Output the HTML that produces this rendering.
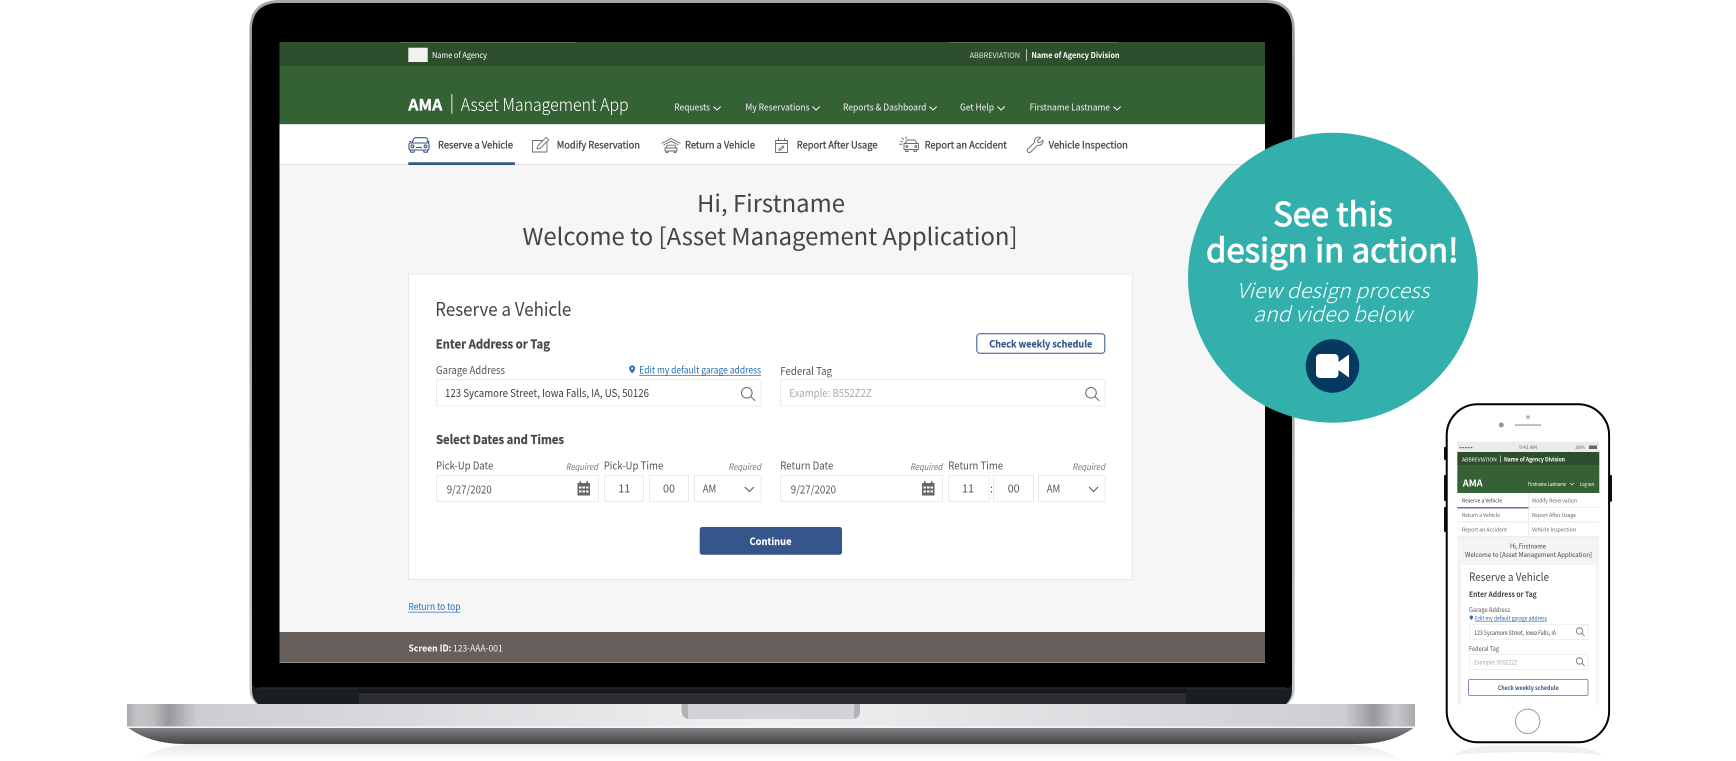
<!DOCTYPE html>
<html><head><meta charset="utf-8"><title>Asset Management App</title>
<style>
html,body{margin:0;padding:0;background:#fff;width:1736px;height:761px;overflow:hidden}
svg{display:block;font-family:"Noto Sans CJK JP","Liberation Sans",sans-serif}
.b{font-weight:700}
.l{font-weight:300}
.i{font-style:italic}
</style></head><body>
<svg width="1736" height="761" viewBox="0 0 1736 761" xmlns="http://www.w3.org/2000/svg">
<defs>
<linearGradient id="baseH" x1="0" x2="1" y1="0" y2="0">
<stop offset="0" stop-color="#a9aaad"/><stop offset=".008" stop-color="#c4c5c7"/><stop offset=".02" stop-color="#bdbec0"/><stop offset=".032" stop-color="#98999c"/><stop offset=".055" stop-color="#cdced1"/><stop offset=".2" stop-color="#d8d9dc"/><stop offset=".5" stop-color="#f1f1f2"/><stop offset=".8" stop-color="#d8d9dc"/><stop offset=".945" stop-color="#cdced1"/><stop offset=".968" stop-color="#98999c"/><stop offset=".985" stop-color="#c9cacc"/><stop offset="1" stop-color="#a9aaad"/>
</linearGradient>
<linearGradient id="baseV" x1="0" x2="0" y1="0" y2="1"><stop offset="0" stop-color="#96979a"/><stop offset=".6" stop-color="#7f8083"/><stop offset="1" stop-color="#434548"/></linearGradient>
<linearGradient id="refl" x1="0" x2="0" y1="0" y2="1"><stop offset="0" stop-color="#e8e8e8"/><stop offset="1" stop-color="#fff"/></linearGradient>
<linearGradient id="lidS" x1="0" x2="0" y1="0" y2="1"><stop offset="0" stop-color="#a8a8a8"/><stop offset=".1" stop-color="#8e8e8e"/><stop offset="1" stop-color="#c9c9c9"/></linearGradient>
<filter id="s" x="0" y="0" width="1" height="1"><feGaussianBlur stdDeviation=".3"/></filter>
<filter id="p" x="-.02" y="-.02" width="1.04" height="1.04"><feGaussianBlur stdDeviation=".35"/></filter>
</defs>

<!-- laptop base -->
<path d="M135 761C150 752 166 746 190 744H1350C1374 746 1390 752 1405 761Z" fill="url(#refl)"/>
<!-- lid -->
<path d="M256 704Q249.500 698 249.500 690V30Q249.500 0 280 0H1265Q1294.700 0 1294.700 30V690Q1294.700 698 1288 704Z" fill="url(#lidS)"/>
<path d="M258 704Q252 699 252 690V30Q252 3 280 3H1265Q1292 3 1292 30V690Q1292 699 1286 704Z" fill="#1b1e21"/>
<rect x="359" y="688" width="827" height="16" fill="#2b2d30"/>
<rect x="359" y="688" width="827" height="5" fill="#15171a"/>
<path d="M252 30Q252 3 280 3H1265Q1292 3 1292 30V682Q1292 688 1286 688H258Q252 688 252 682Z" fill="#000"/>
<rect x="258" y="687.500" width="1028" height=".8" fill="#3a3c3f"/>
<path d="M127 704H1415V727C1400 738 1382 744 1355 744H185C160 744 142 738 127 727Z" fill="url(#baseV)"/>
<rect x="127" y="704" width="1288" height="23" fill="url(#baseH)"/>
<rect x="127" y="726.500" width="1288" height="1.500" fill="#fff" opacity=".9"/>
<path d="M681.700 704H860V711Q860 719 852 719H690Q681.700 719 681.700 711Z" fill="#d2d3d6"/>
<path d="M681.700 704H688V719H690Q681.700 719 681.700 711Z" fill="#b2b3b6"/>
<path d="M854 704H860V711Q860 719 852 719H854Z" fill="#b2b3b6"/>

<!-- screen -->
<g filter="url(#s)">
<rect x="279.500" y="42" width="985.500" height="621" fill="#f6f6f6"/>
<rect x="279.500" y="42" width="985.500" height="24" fill="#2e4f2d"/>
<rect x="400" y="42" width="176" height=".8" fill="#5c7a5c"/>
<rect x="948" y="42" width="170" height=".8" fill="#5c7a5c"/>
<rect x="279.500" y="66" width="985.500" height="58.300" fill="#366236"/>
<rect x="279.500" y="124.300" width="985.500" height="40" fill="#fff"/>
<rect x="279.500" y="164" width="985.500" height="1" fill="#e0e0e0"/>
<rect x="408.300" y="47.700" width="19.400" height="14.300" fill="#f2f2f2"/>
<g fill="#fff">
<text x="432" y="58" textLength="55" lengthAdjust="spacingAndGlyphs" font-size="8">Name of Agency</text>
<text x="969.600" y="58" textLength="50.400" lengthAdjust="spacingAndGlyphs" font-size="7.500" fill="#e4e4e4">ABBREVIATION</text>
<text x="1031.400" y="58" textLength="88.200" lengthAdjust="spacingAndGlyphs" font-size="8" class="b">Name of Agency Division</text>
<text x="408.300" y="110.300" textLength="34" lengthAdjust="spacingAndGlyphs" font-size="15.500" class="b" stroke="#fff" stroke-width=".3">AMA</text>
<text x="460.700" y="111" textLength="168" lengthAdjust="spacingAndGlyphs" font-size="17.500" class="l">Asset Management App</text>
<g font-size="9.200" fill="#f2f2f2">
<text x="674.300" y="110.500" textLength="35.700" lengthAdjust="spacingAndGlyphs">Requests</text>
<text x="745.400" y="110.500" textLength="64.200" lengthAdjust="spacingAndGlyphs">My Reservations</text>
<text x="843" y="110.500" textLength="83.400" lengthAdjust="spacingAndGlyphs">Reports &amp; Dashboard</text>
<text x="960" y="110.500" textLength="34" lengthAdjust="spacingAndGlyphs">Get Help</text>
<text x="1029.600" y="110.500" textLength="80.400" lengthAdjust="spacingAndGlyphs">Firstname Lastname</text>
</g>
</g>
<rect x="451.400" y="94" width=".9" height="19.700" fill="#fff"/>
<rect x="1026" y="49" width=".8" height="12" fill="#ddd"/>
<g fill="none" stroke="#fff" stroke-width="1">
<path d="M713.500 106.500l3.600 3.600 3.600-3.600"/><path d="M812.500 106.500l3.600 3.600 3.600-3.600"/><path d="M929.500 106.500l3.600 3.600 3.600-3.600"/><path d="M997.500 106.500l3.600 3.600 3.600-3.600"/><path d="M1113.500 106.500l3.600 3.600 3.600-3.600"/>
</g>
<!-- subnav -->
<g font-size="9.800" fill="#444" stroke="#444" stroke-width=".28">
<text x="438" y="148.500" textLength="75" lengthAdjust="spacingAndGlyphs">Reserve a Vehicle</text>
<text x="556.700" y="148.500" textLength="83.300" lengthAdjust="spacingAndGlyphs">Modify Reservation</text>
<text x="685" y="148.500" textLength="70" lengthAdjust="spacingAndGlyphs">Return a Vehicle</text>
<text x="796.800" y="148.500" textLength="80.700" lengthAdjust="spacingAndGlyphs">Report After Usage</text>
<text x="924.600" y="148.500" textLength="82.200" lengthAdjust="spacingAndGlyphs">Report an Accident</text>
<text x="1048.600" y="148.500" textLength="79.300" lengthAdjust="spacingAndGlyphs">Vehicle Inspection</text>
</g>
<rect x="408.300" y="162.300" width="106.700" height="2.700" fill="#34558b"/>
<!-- subnav icons -->
<g fill="none" stroke="#34558b" stroke-width="1.100" stroke-linejoin="round">
<path d="M412 143l1.800-4.300q.4-1 1.500-1h10.400q1.100 0 1.500 1l1.800 4.300"/>
<rect x="409" y="143" width="20" height="7" rx="1.500"/>
<path d="M410.500 150v1.500q0 .7.700.7h2.300q.7 0 .7-.7V150M423.800 150v1.500q0 .7.700.7h2.300q.7 0 .7-.7V150M409 141.500h2.500M426.500 141.500h2.500"/>
<circle cx="412.500" cy="146.300" r="1.400"/><circle cx="425.500" cy="146.300" r="1.400"/><path d="M416 147.500h6"/>
</g>
<g fill="none" stroke="#6a6a6a" stroke-width=".9" stroke-linejoin="round">
<path d="M547 142v10h-14.500v-11.500h10"/>
<path d="M537 149l.8-3.300 8.400-8.400 2.500 2.500-8.400 8.400z"/>
<path d="M661.500 143.500l9.500-5 9.500 5M663.500 145l7.500-3.800 7.500 3.800"/>
<path d="M666 148l1-2.800h8l1 2.800M665 148h12v3h-12zM666 151v1.500h2V151M674 151v1.500h2V151"/>
<rect x="775.500" y="140.500" width="12" height="12"/><path d="M775.500 143.500h12M778.500 138v3M784.500 138v3"/>
<path d="M779 150.500l.5-1.700 3.500-3 1 1.200-3.500 3z"/>
<path d="M905 143.500l2-3.500h8l2 3.500M904 143.500h14.500v6H904zM905.500 149.500v2h2.500v-2M914 149.500v2h2.500v-2"/>
<circle cx="906.800" cy="146.500" r="1"/><circle cx="915.800" cy="146.500" r="1"/>
<path d="M900 141l3 1M902 137.500l1.500 2.500M899.500 144.500l3-.5M906 136.500l.3 2.500"/>
<path d="M1040.500 137.500l-2.800 2.700.3 2.200 2.200.3 2.700-2.800q.5 2.800-1.400 4.500-1.700 1.400-4 .8l-6.700 6.800q-1.500 1.200-3 0-1.200-1.500 0-3l6.800-6.700q-.6-2.300.8-4 1.700-1.900 5.100-.8z"/>
</g>

<!-- main -->
<g fill="#444">
<text x="697" y="212" textLength="148" lengthAdjust="spacingAndGlyphs" font-size="23.500">Hi, Firstname</text>
<text x="522.500" y="245" textLength="495" lengthAdjust="spacingAndGlyphs" font-size="23.500">Welcome to [Asset Management Application]</text>
</g>
<rect x="408.500" y="274" width="723.800" height="305.500" fill="#fff" stroke="#e8e8e8"/>
<g fill="#444">
<text x="435.300" y="316" textLength="136" lengthAdjust="spacingAndGlyphs" font-size="18.800">Reserve a Vehicle</text>
<text x="435.700" y="348.300" textLength="114.300" lengthAdjust="spacingAndGlyphs" font-size="12.300" class="b" stroke="#444" stroke-width=".2">Enter Address or Tag</text>
<text x="436" y="444" textLength="128" lengthAdjust="spacingAndGlyphs" font-size="12.300" class="b" stroke="#444" stroke-width=".2">Select Dates and Times</text>
</g>
<g fill="#555" font-size="10.800">
<text x="436" y="374" textLength="69" lengthAdjust="spacingAndGlyphs">Garage Address</text>
<text x="780.300" y="375" textLength="51.700" lengthAdjust="spacingAndGlyphs">Federal Tag</text>
<text x="436" y="469.500" textLength="57.300" lengthAdjust="spacingAndGlyphs">Pick-Up Date</text>
<text x="603.700" y="469.500" textLength="59.600" lengthAdjust="spacingAndGlyphs">Pick-Up Time</text>
<text x="780.300" y="469.500" textLength="53" lengthAdjust="spacingAndGlyphs">Return Date</text>
<text x="948.300" y="469.500" textLength="54.700" lengthAdjust="spacingAndGlyphs">Return Time</text>
</g>
<g fill="#777" font-size="8.800" class="i">
<text x="565.700" y="470" textLength="32.300" lengthAdjust="spacingAndGlyphs">Required</text>
<text x="728.300" y="470" textLength="32.700" lengthAdjust="spacingAndGlyphs">Required</text>
<text x="910" y="470" textLength="32.300" lengthAdjust="spacingAndGlyphs">Required</text>
<text x="1072.300" y="470" textLength="32.700" lengthAdjust="spacingAndGlyphs">Required</text>
</g>
<text x="639.300" y="373.300" textLength="121.700" lengthAdjust="spacingAndGlyphs" font-size="9.800" fill="#2b6cb0">Edit my default garage address</text>
<rect x="639.300" y="375" width="121.700" height=".7" fill="#2b6cb0"/>
<path d="M632.200 365.500c-1.800 0-3 1.300-3 2.900 0 2.100 3 5.100 3 5.100s3-3 3-5.100c0-1.600-1.200-2.900-3-2.900zm0 4a1.100 1.100 0 1 1 0-2.200 1.100 1.100 0 0 1 0 2.200z" fill="#2b6cb0"/>
<g fill="#fff" stroke="#ebebeb">
<rect x="436.500" y="379.500" width="324.500" height="26.500"/>
<rect x="780.500" y="379.500" width="324.500" height="26.500"/>
<rect x="436.500" y="475.500" width="162" height="26"/>
<rect x="604.500" y="475.500" width="39" height="26"/>
<rect x="649.500" y="475.500" width="39" height="26"/>
<rect x="694.500" y="475.500" width="66.500" height="26"/>
<rect x="780.500" y="475.500" width="162" height="26"/>
<rect x="948.500" y="475.500" width="40.500" height="26"/>
<rect x="993.500" y="475.500" width="40" height="26"/>
<rect x="1038.500" y="475.500" width="66.500" height="26"/>
</g>
<text x="445" y="397" textLength="204" lengthAdjust="spacingAndGlyphs" font-size="10.800" fill="#3c3c3c">123 Sycamore Street, Iowa Falls, IA, US, 50126</text>
<text x="789.300" y="397" textLength="82.400" lengthAdjust="spacingAndGlyphs" font-size="10.800" fill="#aaa">Example: B552Z2Z</text>
<g font-size="10.800" fill="#555">
<text x="446.700" y="493.300" textLength="45" lengthAdjust="spacingAndGlyphs">9/27/2020</text>
<text x="790.700" y="493.300" textLength="45.300" lengthAdjust="spacingAndGlyphs">9/27/2020</text>
<text x="624.300" y="492.500" text-anchor="middle">11</text>
<text x="669" y="492.500" text-anchor="middle">00</text>
<text x="702.700" y="492.500" textLength="13.500" lengthAdjust="spacingAndGlyphs">AM</text>
<text x="968" y="492.500" text-anchor="middle">11</text>
<text x="1013.700" y="492.500" text-anchor="middle">00</text>
<text x="1046.700" y="492.500" textLength="13.500" lengthAdjust="spacingAndGlyphs">AM</text>
<text x="990" y="492.500">:</text>
</g>
<!-- search icons -->
<g fill="none" stroke="#666" stroke-width="1">
<circle cx="746.800" cy="392.800" r="5.300"/><path d="M750.600 396.600l4.600 4.200"/>
<circle cx="1091" cy="392.800" r="5.300"/><path d="M1094.800 396.600l4.600 4.200"/>
<path d="M744.800 487l4.500 4.500 4.500-4.500" stroke="#555"/>
<path d="M1089 487l4.500 4.500 4.500-4.500" stroke="#555"/>
</g>
<!-- calendars -->
<g fill="#666">
<path d="M577.500 483h12.500v12.500h-12.500zM579.500 481h1.500v2.500h-1.500zM586.500 481h1.500v2.500h-1.500z"/>
<path d="M922 483h12.500v12.500H922zM924 481h1.500v2.500H924zM931 481h1.500v2.500H931z"/>
</g>
<g fill="#fff">
<rect x="579" y="486.500" width="2.500" height="2"/><rect x="582.500" y="486.500" width="2.500" height="2"/><rect x="586" y="486.500" width="2.500" height="2"/>
<rect x="579" y="490.500" width="2.500" height="2"/><rect x="582.500" y="490.500" width="2.500" height="2"/><rect x="586" y="490.500" width="2.500" height="2"/>
<rect x="923.500" y="486.500" width="2.500" height="2"/><rect x="927" y="486.500" width="2.500" height="2"/><rect x="930.500" y="486.500" width="2.500" height="2"/>
<rect x="923.500" y="490.500" width="2.500" height="2"/><rect x="927" y="490.500" width="2.500" height="2"/><rect x="930.500" y="490.500" width="2.500" height="2"/>
</g>
<!-- buttons -->
<rect x="976.800" y="333.800" width="128" height="19.500" rx="3" fill="#fff" stroke="#34558b"/>
<text x="989.300" y="347.300" textLength="103" lengthAdjust="spacingAndGlyphs" font-size="9.800" class="b" fill="#34558b" stroke="#34558b" stroke-width=".15">Check weekly schedule</text>
<rect x="699.700" y="527" width="142.300" height="27.700" rx="2.500" fill="#34558b"/>
<text x="749.500" y="545" textLength="42" lengthAdjust="spacingAndGlyphs" font-size="9.800" class="b" fill="#fff" stroke="#fff" stroke-width=".15">Continue</text>
<text x="408.500" y="610" textLength="52" lengthAdjust="spacingAndGlyphs" font-size="9.400" fill="#2b6cb0">Return to top</text>
<rect x="408.500" y="611.800" width="52" height=".7" fill="#2b6cb0"/>
<!-- footer -->
<rect x="279.500" y="632" width="985.500" height="30.700" fill="#65615c"/>
<text x="408.500" y="651.700" textLength="43" lengthAdjust="spacingAndGlyphs" font-size="9" class="b" fill="#fff">Screen ID:</text>
<text x="453" y="651.700" textLength="49.700" lengthAdjust="spacingAndGlyphs" font-size="9" fill="#f2f2f2">123-AAA-001</text>
</g>

<!-- badge -->
<circle cx="1333" cy="277.700" r="145" fill="#33b0ac"/>
<g fill="#fff">
<g stroke="#fff" stroke-width=".9">
<text x="1273.300" y="226" textLength="119.400" lengthAdjust="spacingAndGlyphs" font-size="32.500">See this</text>
<text x="1206" y="262" textLength="252.700" lengthAdjust="spacingAndGlyphs" font-size="32.500">design in action!</text>
</g>
<text x="1236.700" y="298" textLength="192.600" lengthAdjust="spacingAndGlyphs" font-size="20.500" class="i l">View design process</text>
<text x="1253.300" y="321.500" textLength="158.700" lengthAdjust="spacingAndGlyphs" font-size="20.500" class="i l">and video below</text>
</g>
<circle cx="1332.500" cy="366" r="26.800" fill="#06395f"/>
<rect x="1316" y="354" width="22.500" height="24" rx="4" fill="#fff"/>
<path d="M1337 363l12-8.500v23l-12-8.500z" fill="#fff"/>

<!-- phone -->
<path d="M1452 756C1464 749 1476 746 1490 745.500H1566C1580 746 1592 749 1604 756C1590 751 1470 751 1452 756Z" fill="#f0f0f0"/>
<g fill="#111">
<rect x="1444" y="447" width="3" height="13" rx="1"/>
<rect x="1444" y="475" width="3" height="26" rx="1"/>
<rect x="1444" y="507" width="3" height="25" rx="1"/>
<rect x="1609" y="475" width="3" height="26.700" rx="1"/>
</g>
<rect x="1446.700" y="404.300" width="162.400" height="338" rx="31" fill="#fff" stroke="#000" stroke-width="2"/>
<rect x="1515" y="424.300" width="26" height="1.500" fill="#aaa"/>
<circle cx="1501.300" cy="425" r="2.500" fill="#999"/>
<circle cx="1528" cy="417" r="1.800" fill="#aaa"/>
<circle cx="1527.700" cy="721.300" r="12.200" fill="#fff" stroke="#999" stroke-width="1"/>

<g filter="url(#p)">
<rect x="1457.300" y="441.700" width="142" height="262.600" fill="#f4f4f4"/>
<rect x="1457.300" y="441.700" width="142" height="10.300" fill="#ebebeb"/>
<rect x="1457.300" y="452" width="142" height="13" fill="#2e4f2d"/>
<rect x="1457.300" y="465" width="142" height="28" fill="#366236"/>
<rect x="1457.300" y="493" width="142" height="43.700" fill="#fff"/>
<g stroke="#e4e4e4" stroke-width=".7" fill="none"><path d="M1457.300 507.700h142M1457.300 522h142M1457.300 536.700h142M1528.700 493v43.700"/></g>
<rect x="1457.300" y="507.200" width="71" height="1.200" fill="#34558b"/>
<g font-size="4.700" fill="#666">
<text x="1459" y="449" textLength="14" lengthAdjust="spacingAndGlyphs">•••••</text>
<text x="1519" y="449" textLength="18" lengthAdjust="spacingAndGlyphs">9:41 AM</text>
<text x="1575" y="449" textLength="10" lengthAdjust="spacingAndGlyphs">100%</text>
</g>
<rect x="1589" y="445.500" width="8" height="3.500" fill="#666"/>
<g fill="#fff">
<text x="1462" y="461.500" textLength="34.700" lengthAdjust="spacingAndGlyphs" font-size="5.500">ABBREVIATION</text>
<rect x="1500" y="455.500" width=".6" height="7"/>
<text x="1504" y="461.500" textLength="61" lengthAdjust="spacingAndGlyphs" font-size="5.500" class="b">Name of Agency Division</text>
<text x="1462.700" y="486.500" textLength="20" lengthAdjust="spacingAndGlyphs" font-size="9.500" class="b">AMA</text>
<text x="1528" y="486" textLength="38" lengthAdjust="spacingAndGlyphs" font-size="5.200">Firstname Lastname</text>
<text x="1580" y="486" textLength="14" lengthAdjust="spacingAndGlyphs" font-size="5.200">Log out</text>
</g>
<path d="M1570 483l2 2 2-2" fill="none" stroke="#fff" stroke-width=".6"/>
<g font-size="5.500" fill="#666">
<text x="1462" y="502.500" textLength="40" lengthAdjust="spacingAndGlyphs" fill="#333">Reserve a Vehicle</text>
<text x="1532" y="502.500" textLength="45" lengthAdjust="spacingAndGlyphs">Modify Reservation</text>
<text x="1462" y="517" textLength="38" lengthAdjust="spacingAndGlyphs">Return a Vehicle</text>
<text x="1532" y="517" textLength="44" lengthAdjust="spacingAndGlyphs">Report After Usage</text>
<text x="1462" y="531.500" textLength="45" lengthAdjust="spacingAndGlyphs">Report an Accident</text>
<text x="1532" y="531.500" textLength="44" lengthAdjust="spacingAndGlyphs">Vehicle Inspection</text>
</g>
<g font-size="6.500" fill="#444">
<text x="1510" y="548.500" textLength="36" lengthAdjust="spacingAndGlyphs">Hi, Firstname</text>
<text x="1465" y="557" textLength="127" lengthAdjust="spacingAndGlyphs">Welcome to [Asset Management Application]</text>
</g>
<rect x="1461" y="565" width="135" height="139.300" fill="#fff"/>
<text x="1469" y="581" textLength="80" lengthAdjust="spacingAndGlyphs" font-size="11.200" fill="#444">Reserve a Vehicle</text>
<text x="1469" y="597" textLength="67.700" lengthAdjust="spacingAndGlyphs" font-size="7.500" class="b" fill="#444">Enter Address or Tag</text>
<text x="1469" y="612" textLength="41" lengthAdjust="spacingAndGlyphs" font-size="6.500" fill="#555">Garage Address</text>
<path d="M1471.300 615.500c-1 0-1.700.7-1.700 1.600 0 1.200 1.700 2.900 1.700 2.900s1.700-1.700 1.700-2.900c0-.9-.7-1.600-1.700-1.600z" fill="#2b6cb0"/>
<text x="1475" y="620.500" textLength="72" lengthAdjust="spacingAndGlyphs" font-size="6" fill="#2b6cb0">Edit my default garage address</text>
<rect x="1475" y="621.500" width="72" height=".5" fill="#2b6cb0"/>
<rect x="1469.300" y="624.300" width="118.700" height="15" fill="#fff" stroke="#e8e8e8" stroke-width=".7"/>
<text x="1474.300" y="635" textLength="81.700" lengthAdjust="spacingAndGlyphs" font-size="6" fill="#444">123 Sycamore Street, Iowa Falls, IA</text>
<text x="1469" y="651" textLength="30" lengthAdjust="spacingAndGlyphs" font-size="6.500" fill="#555">Federal Tag</text>
<rect x="1469.300" y="654.300" width="118.700" height="15" fill="#fff" stroke="#e8e8e8" stroke-width=".7"/>
<text x="1474.300" y="664.500" textLength="43" lengthAdjust="spacingAndGlyphs" font-size="6" fill="#aaa">Example: B552Z2Z</text>
<g fill="none" stroke="#666" stroke-width=".8">
<circle cx="1579.500" cy="631" r="3.200"/><path d="M1581.800 633.300l2.800 2.800"/>
<circle cx="1579.500" cy="661" r="3.200"/><path d="M1581.800 663.300l2.800 2.800"/>
</g>
<rect x="1468.500" y="679.500" width="119.500" height="16" rx="1.500" fill="#fff" stroke="#5a76a8" stroke-width=".8"/>
<text x="1497.700" y="690" textLength="61" lengthAdjust="spacingAndGlyphs" font-size="6" class="b" fill="#34558b">Check weekly schedule</text>
</g>
</svg>
</body></html>
